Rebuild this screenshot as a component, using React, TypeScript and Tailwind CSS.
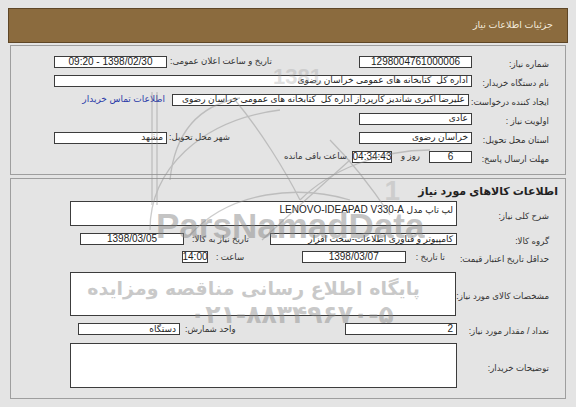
import React from "react";

const font = "font-['Liberation_Sans','DejaVu_Sans',sans-serif]";

function Field({
  className = "",
  center,
  num,
  children,
}: {
  className?: string;
  center?: boolean;
  num?: boolean;
  children?: React.ReactNode;
}) {
  return (
    <div
      className={`h-[12px] shrink-0 bg-white border border-[#3c3c3c] px-[3px] flex items-center overflow-hidden whitespace-pre leading-none text-[#222] ${
        num ? "text-[10px]" : "text-[9px]"
      } ${center ? "justify-center" : "justify-start"} ${className}`}
    >
      {children}
    </div>
  );
}

function Label({ children, className = "" }: { children: React.ReactNode; className?: string }) {
  return <span className={`whitespace-nowrap text-[8.6px] leading-none text-[#333] ${className}`}>{children}</span>;
}

function Row({
  label,
  labelWidth = "w-[77px]",
  className = "h-[19px]",
  children,
}: {
  label: string;
  labelWidth?: string;
  className?: string;
  children?: React.ReactNode;
}) {
  return (
    <div className={`flex items-center ${className}`}>
      <div className={`${labelWidth} shrink-0`}>
        <Label>{label}</Label>
      </div>
      {children}
    </div>
  );
}

function Watermark() {
  return (
    <div className="absolute inset-0 pointer-events-none">
      <svg className="absolute inset-0" width="576" height="407" viewBox="0 0 576 407" fill="none">
        <g stroke="#8f8f8f" strokeWidth="1.3" opacity="0.45">
          <line x1="152" y1="92" x2="152" y2="205" />
          <line x1="157" y1="92" x2="157" y2="205" />
          <path d="M170 180 C 175 130, 200 105, 240 98" />
          <path d="M150 230 C 150 170, 200 120, 280 110" />
          <path d="M235 100 C 260 130, 285 170, 300 200" />
          <path d="M300 200 C 330 170, 380 150, 430 150" />
          <path d="M190 235 C 230 190, 300 185, 350 200" />
          <path d="M350 160 L 300 205 L 262 240" />
          <path d="M330 140 C 360 170, 380 200, 390 215" />
        </g>
        <g fill="#9a9a9a" opacity="0.3" fontFamily="Liberation Sans, sans-serif" fontWeight="700">
          <text x="322" y="84" fontSize="22">1381</text>
          <text x="400" y="200" fontSize="28">1</text>
        </g>
      </svg>
      <div className="absolute left-[156px] top-[208px] text-[35px] font-bold leading-none text-[#8a8a8a] opacity-50 font-['Liberation_Sans',sans-serif]">
        ParsNamadData
      </div>
      <div
        dir="rtl"
        className="absolute left-[148px] top-[279px] w-[272px] text-center whitespace-nowrap text-[19px] font-bold leading-none text-[#8a8a8a] opacity-45 font-['DejaVu_Sans',sans-serif]"
      >
        پایگاه اطلاع رسانی مناقصه ومزایده
      </div>
      <div
        dir="ltr"
        className="absolute left-[190px] top-[302px] whitespace-nowrap text-[25px] font-bold leading-none text-[#8a8a8a] opacity-45 font-['DejaVu_Sans',sans-serif]"
      >
        ۰۲۱-۸۸۳۴۹۶۷۰-۵
      </div>
    </div>
  );
}

export default function App() {
  return (
    <div dir="rtl" className={`relative w-[576px] h-[407px] overflow-hidden bg-[#e4e4e4] pt-[8px] ${font}`}>
      {/* header */}
      <div className="mx-[8px] h-[35px] bg-[#8b6b3e] border border-[#5e4626] flex items-center pr-[14px]">
        <span className="text-[9.5px] text-[#f2eadb]">جزئیات اطلاعات نیاز</span>
      </div>

      {/* main info */}
      <div className="mx-[10px] mt-[2px] h-[130px] border border-[#9e9e9e] pt-[6px] pr-[16px] pl-[43px]">
        <Row label="شماره نیاز:">
          <Field className="w-[113px]" center num>
            1298004761000006
          </Field>
          <div className="flex-1 flex justify-end items-center gap-[3px]">
            <Label>تاریخ و ساعت اعلان عمومی:</Label>
            <Field className="w-[113px]" center num>
              1398/02/30 - 09:20
            </Field>
          </div>
        </Row>
        <Row label="نام دستگاه خریدار:">
          <Field className="flex-1">اداره کل  کتابخانه های عمومی خراسان رضوی</Field>
        </Row>
        <Row label="ایجاد کننده درخواست:" labelWidth="w-[80px]">
          <Field className="w-[297px]">علیرضا اکبری شاندیز کارپرداز اداره کل  کتابخانه های عمومی خراسان رضوی</Field>
          <a className="mr-[7px] text-[9px] leading-none text-[#2a3aa8] whitespace-nowrap">اطلاعات تماس خریدار</a>
        </Row>
        <Row label="اولویت نیاز :">
          <Field className="w-[113px]">عادی</Field>
        </Row>
        <Row label="استان محل تحویل:">
          <Field className="w-[113px]">خراسان رضوی</Field>
          <div className="flex-1 flex justify-end items-center gap-[2px]">
            <Label>شهر محل تحویل:</Label>
            <Field className="w-[113px]">مشهد</Field>
          </div>
        </Row>
        <Row label="مهلت ارسال پاسخ:">
          <Field className="w-[43px]" center num>
            6
          </Field>
          <Label className="mr-[9px] ml-[9px]">روز و</Label>
          <Field className="w-[40px] !px-[1px]" center num>
            04:34:43
          </Field>
          <Label className="mr-[5px]">ساعت باقی مانده</Label>
        </Row>
      </div>

      {/* goods info */}
      <div className="mx-[10px] mt-[3px] h-[221px] border border-[#9e9e9e] pr-[16px] pl-[59px]">
        <div className="mt-[5px] h-[14px] -mr-[9px] flex items-center">
          <span className="text-[11px] font-bold text-[#222] whitespace-nowrap">اطلاعات کالاهای مورد نیاز</span>
        </div>
        <Row label="شرح کلی نیاز:" labelWidth="w-[92px]" className="mt-[3px] h-[25px]">
          <div className="flex-1 h-[25px] bg-white border border-[#3c3c3c] px-[3px] pt-[2px] text-[10px] leading-[11px] text-[#222]">
            <span className="text-[9px]">لپ تاپ مدل</span> LENOVO-IDEAPAD V330-A
          </div>
        </Row>
        <Row label="گروه کالا:" labelWidth="w-[92px]" className="mt-[3px] h-[20px]">
          <Field className="w-[187px]">کامپیوتر و فناوری اطلاعات-سخت افزار</Field>
          <div className="flex-1 flex justify-end items-center gap-[8px] pl-[10px]">
            <Label>تاریخ نیاز به کالا:</Label>
            <Field className="w-[104px]" center num>
              1398/03/05
            </Field>
          </div>
        </Row>
        <Row label="حداقل تاریخ اعتبار قیمت:" labelWidth="w-[92px]" className="h-[16px]">
          <Label className="mr-[12px]">تا تاریخ :</Label>
          <Field className="w-[104px] mr-[10px]" center num>
            1398/03/07
          </Field>
          <div className="flex-1 flex justify-end items-center gap-[8px] pl-[112px]">
            <Label>ساعت :</Label>
            <Field className="w-[26px] !px-[1px]" center num>
              14:00
            </Field>
          </div>
        </Row>
        <Row label="مشخصات کالای مورد نیاز:" labelWidth="w-[93px]" className="mt-[7px] h-[44px]">
          <div className="flex-1 h-[44px] bg-white border border-[#3c3c3c]" />
        </Row>
        <Row label="تعداد / مقدار مورد نیاز:" labelWidth="w-[92px]" className="h-[26px]">
          <Field className="w-[112px]" num>
            2
          </Field>
          <div className="flex-1 flex justify-end items-center gap-[5px] pl-[8px]">
            <Label>واحد شمارش:</Label>
            <Field className="w-[102px]">دستگاه</Field>
          </div>
        </Row>
        <Row label="توضیحات خریدار:" labelWidth="w-[92px]" className="mt-[1px] h-[45px]">
          <div className="flex-1 h-[45px] bg-white border border-[#3c3c3c]" />
        </Row>
      </div>

      <Watermark />
    </div>
  );
}
